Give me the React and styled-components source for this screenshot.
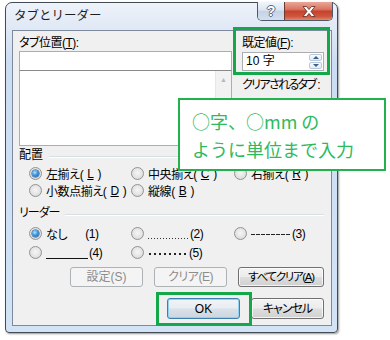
import React from "react";
import styled, { createGlobalStyle, css } from "styled-components";

const GlobalStyle = createGlobalStyle`
  html, body { margin: 0; padding: 0; background: #fff; }
  body {
    font-family: "Liberation Sans", "Noto Sans CJK JP", sans-serif;
    font-size: 12px;
    font-feature-settings: "palt";
    color: #000;
  }
  * { box-sizing: border-box; }
`;

const GREEN = "#14a84a";

const Page = styled.div`
  position: relative;
  width: 390px;
  height: 340px;
  padding: 2px 0 0 5px;
  overflow: hidden;
`;

const Window = styled.div`
  width: 333px;
  height: 331px;
  border: 1px solid #434b55;
  border-radius: 7px 7px 4px 4px;
  background: linear-gradient(180deg, #eef3fa 0px, #dfe8f5 26px, #cbddf2 60px, #d2e3f6 100%);
  padding: 0 5px 6px 6px;
  display: flex;
  flex-direction: column;
  box-shadow: 1px 1px 2px rgba(0, 0, 0, 0.4);
`;

const TitleBar = styled.div`
  height: 27px;
  display: flex;
  align-items: flex-start;
  margin-right: -1px;
  flex: none;
`;

const Title = styled.div`
  padding: 4px 0 0 2px;
  font-family: "Noto Sans CJK JP", sans-serif;
  font-feature-settings: normal;
  font-size: 12.5px;
  line-height: 16px;
  color: #1e1e1e;
`;

const CaptionButtons = styled.div`
  margin-left: auto;
  margin-top: -1px;
  display: flex;
  border: 1px solid #4e5a68;
  border-top: none;
  border-radius: 0 0 5px 5px;
  overflow: hidden;
  height: 19px;
`;

const CaptionButton = styled.div`
  width: ${(p) => p.$w}px;
  height: 100%;
  display: flex;
  align-items: center;
  justify-content: center;
  ${(p) =>
    p.$close
      ? css`
          background: linear-gradient(180deg, #e9a797 0%, #da7663 40%, #c6432d 52%, #cf553e 80%, #e08a6d 100%);
          border-left: 1px solid #6b3a33;
        `
      : css`
          background: linear-gradient(180deg, #f1f5fb 0%, #dbe5f1 45%, #c4d3e6 52%, #d3e0f0 100%);
        `}
`;

const HelpGlyph = styled.span`
  font-family: "Liberation Sans", sans-serif;
  font-weight: bold;
  font-size: 14px;
  line-height: 14px;
  color: #fff;
  text-shadow: -1px 0 #5b6b80, 1px 0 #5b6b80, 0 -1px #5b6b80, 0 1px #5b6b80;
`;

const Client = styled.div`
  flex: 1;
  border: 1px solid #7c8a9c;
  background: #f0f0f0;
  padding: 5px 7px 0 6px;
  display: flex;
  flex-direction: column;
`;

const TopGrid = styled.div`
  display: grid;
  grid-template-columns: 213px 82px;
  column-gap: 10px;
`;

const Column = styled.div`
  display: flex;
  flex-direction: column;
`;

const Label = styled.div`
  line-height: 15px;
  height: 15px;
  white-space: nowrap;
  margin-top: ${(p) => p.$mt || 0}px;
  letter-spacing: ${(p) => p.$ls || 0}px;
`;

const TextBox = styled.div`
  height: 20px;
  background: #fff;
  border: 1px solid #abadb3;
  border-bottom: 1px solid #8a8a8a;
`;

const ListBox = styled.div`
  height: 75px;
  background: #fff;
  border: 1px solid #abadb3;
  border-top: none;
  display: flex;
  justify-content: flex-end;
`;

const ScrollBar = styled.div`
  width: 16px;
  background: #f2f2f2;
  border-left: 1px solid #e6e6e6;
`;

const ScrollArrow = styled.div`
  height: 17px;
  display: flex;
  align-items: center;
  justify-content: center;
  color: #b8b8b8;
  font-size: 7px;
  line-height: 7px;
`;

const Field = styled.div`
  position: relative;
  display: flex;
  flex-direction: column;
`;

const Highlight = styled.div`
  position: absolute;
  border: 3px solid ${GREEN};
  pointer-events: none;
  top: ${(p) => p.$t}px;
  left: ${(p) => p.$l}px;
  right: ${(p) => p.$r}px;
  bottom: ${(p) => p.$b}px;
`;

const Spinner = styled.div`
  margin-top: 1px;
  height: 19px;
  background: #fff;
  border: 1px solid #abadb3;
  display: flex;
  align-items: center;
  padding-left: 3px;
`;

const SpinValue = styled.span`
  flex: 1;
  line-height: 15px;
`;

const SpinButtons = styled.div`
  width: 14px;
  height: 100%;
  display: flex;
  flex-direction: column;
  padding: 1px 1px 1px 0;
  gap: 1px;
`;

const SpinHalf = styled.div`
  flex: 1;
  border: 1px solid #b9c9dc;
  border-radius: 2px;
  background: linear-gradient(180deg, #f7fafd, #e3ebf5);
  display: flex;
  align-items: center;
  justify-content: center;
`;

const Tri = styled.span`
  width: 0;
  height: 0;
  border-left: 3px solid transparent;
  border-right: 3px solid transparent;
  ${(p) =>
    p.$down
      ? css`border-top: 3px solid #3c5f8c;`
      : css`border-bottom: 3px solid #3c5f8c;`}
`;

const GroupHeader = styled.div`
  display: flex;
  align-items: center;
  height: 15px;
  line-height: 15px;
  margin-top: ${(p) => p.$mt}px;
  letter-spacing: ${(p) => p.$ls || 0}px;
`;

const GroupLine = styled.div`
  flex: 1;
  height: 1px;
  margin: 2px 0 0 6px;
  background: #d5dfe6;
  box-shadow: 0 1px 0 #fff;
`;

const OptionGrid = styled.div`
  display: grid;
  grid-template-columns: 102px 103px auto;
  grid-auto-rows: ${(p) => p.$row}px;
  padding-left: 10px;
  margin-top: ${(p) => p.$mt}px;
`;

const Option = styled.label`
  display: flex;
  align-items: center;
  gap: 4px;
  white-space: nowrap;
  letter-spacing: -0.4px;
`;

const Radio = styled.span`
  position: relative;
  flex: none;
  width: 13px;
  height: 13px;
  border-radius: 50%;
  border: 1px solid #939393;
  background: radial-gradient(circle at 50% 45%, #f6f6f6 0%, #e4e4e4 55%, #cfcfcf 100%);
  ${(p) =>
    p.$checked &&
    css`
      &::after {
        content: "";
        position: absolute;
        left: 2px;
        top: 2px;
        width: 7px;
        height: 7px;
        border-radius: 50%;
        background: radial-gradient(circle at 40% 35%, #b9e3ff 0%, #3b95dd 45%, #1a5b9c 100%);
        box-shadow: 0 0 0 0.5px #1d4f80;
      }
    `}
`;

const LeaderText = styled.span`
  display: flex;
  align-items: center;
`;

const Leader = styled.span`
  display: inline-block;
  width: ${(p) => p.$w}px;
  height: 14px;
  margin-right: 1px;
  ${(p) =>
    p.$kind === "dots" &&
    css`
      background: repeating-linear-gradient(90deg, #333 0 1px, transparent 1px 3px) left 11px / 100% 1px no-repeat;
    `}
  ${(p) =>
    p.$kind === "dash" &&
    css`
      background: repeating-linear-gradient(90deg, #222 0 4px, transparent 4px 5px) left 7px / 100% 1px no-repeat;
    `}
  ${(p) =>
    p.$kind === "line" &&
    css`
      background: linear-gradient(#111, #111) left 12px / 100% 1px no-repeat;
    `}
  ${(p) =>
    p.$kind === "mid" &&
    css`
      background: repeating-linear-gradient(90deg, #222 0 2px, transparent 2px 5px) 1px 7px / 100% 2px no-repeat;
    `}
`;

const Gap = styled.span`
  display: inline-block;
  width: ${(p) => p.$w}px;
`;

const ButtonRow = styled.div`
  display: flex;
  justify-content: flex-end;
  gap: 11px;
  margin-top: ${(p) => p.$mt}px;
`;

const ButtonWrap = styled.div`
  position: relative;
  display: flex;
`;

const Button = styled.div`
  width: ${(p) => p.$w}px;
  height: ${(p) => p.$h}px;
  display: flex;
  align-items: center;
  justify-content: center;
  border-radius: 3px;
  border: 1px solid #707070;
  background: linear-gradient(180deg, #f3f3f3 0%, #ececec 48%, #dedede 52%, #d0d0d0 100%);
  box-shadow: inset 0 0 0 1px rgba(255, 255, 255, 0.75);
  color: #000;
  white-space: nowrap;
  overflow: hidden;
  ${(p) =>
    p.$disabled &&
    css`
      border-color: #adb2b5;
      background: #f4f4f4;
      box-shadow: none;
      color: #8c8c8c;
    `}
  ${(p) =>
    p.$default &&
    css`
      border-color: #3c7fb1;
      background: linear-gradient(180deg, #f1f4f7 0%, #e8edf2 48%, #d9e1e9 52%, #ccd6e0 100%);
      box-shadow: inset 0 0 0 1px #8fd2f5;
    `}
`;

const ButtonText = styled.span`
  font-size: ${(p) => p.$fs || 12}px;
  letter-spacing: ${(p) => p.$ls || 0}px;
  line-height: 14px;
`;

const Callout = styled.div`
  position: absolute;
  left: 178px;
  top: 98px;
  width: 208px;
  height: 73px;
  background: #fff;
  border: 2px solid #22b14c;
  padding: 7px 0 0 12px;
  font-family: "Noto Sans CJK JP", sans-serif;
  font-feature-settings: normal;
  font-size: 18px;
  line-height: 28px;
  color: #2cba5e;
  white-space: nowrap;
`;

export default function App() {
  return (
    <Page>
      <GlobalStyle />
      <Window>
        <TitleBar>
          <Title>タブとリーダー</Title>
          <CaptionButtons>
            <CaptionButton $w={26}>
              <HelpGlyph>?</HelpGlyph>
            </CaptionButton>
            <CaptionButton $w={48} $close>
              <svg width="14" height="11" viewBox="0 0 14 11">
                <path
                  d="M1 0.5 H4.5 L7 3.5 L9.5 0.5 H13 L9 5.5 L13 10.5 H9.5 L7 7.5 L4.5 10.5 H1 L5 5.5 Z"
                  fill="#fff"
                  stroke="#5a2a22"
                  strokeWidth="0.8"
                  strokeLinejoin="round"
                />
              </svg>
            </CaptionButton>
          </CaptionButtons>
        </TitleBar>
        <Client>
          <TopGrid>
            <Column>
              <Label $ls={-0.5}>
                タブ位置(<u>T</u>):
              </Label>
              <TextBox />
              <ListBox>
                <ScrollBar>
                  <ScrollArrow>▲</ScrollArrow>
                </ScrollBar>
              </ListBox>
            </Column>
            <Column>
              <Field>
                <Label $ls={-0.5}>
                  既定値(<u>F</u>):
                </Label>
                <Spinner>
                  <SpinValue>10 字</SpinValue>
                  <SpinButtons>
                    <SpinHalf>
                      <Tri />
                    </SpinHalf>
                    <SpinHalf>
                      <Tri $down />
                    </SpinHalf>
                  </SpinButtons>
                </Spinner>
                <Highlight $t={-9} $l={-9} $r={-6} $b={-4} />
              </Field>
              <Label $mt={7} $ls={-1.6}>
                クリアされるタブ :
              </Label>
            </Column>
          </TopGrid>

          <GroupHeader $mt={2}>
            配置
            <GroupLine />
          </GroupHeader>
          <OptionGrid $row={17} $mt={2}>
            <Option>
              <Radio $checked />
              左揃え(<u>L</u>)
            </Option>
            <Option>
              <Radio />
              中央揃え(<u>C</u>)
            </Option>
            <Option>
              <Radio />
              右揃え(<u>R</u>)
            </Option>
            <Option>
              <Radio />
              小数点揃え(<u>D</u>)
            </Option>
            <Option>
              <Radio />
              縦線(<u>B</u>)
            </Option>
          </OptionGrid>

          <GroupHeader $mt={7} $ls={-1}>
            リーダー
            <GroupLine />
          </GroupHeader>
          <OptionGrid $row={19} $mt={3}>
            <Option>
              <Radio $checked />
              <LeaderText>
                なし
                <Gap $w={18} />
                (1)
              </LeaderText>
            </Option>
            <Option>
              <Radio />
              <LeaderText>
                <Leader $w={41} $kind="dots" />
                (2)
              </LeaderText>
            </Option>
            <Option>
              <Radio />
              <LeaderText>
                <Leader $w={40} $kind="dash" />
                (3)
              </LeaderText>
            </Option>
            <Option>
              <Radio />
              <LeaderText>
                <Leader $w={42} $kind="line" />
                (4)
              </LeaderText>
            </Option>
            <Option>
              <Radio />
              <LeaderText>
                <Leader $w={40} $kind="mid" />
                (5)
              </LeaderText>
            </Option>
          </OptionGrid>

          <ButtonRow $mt={5}>
            <Button $w={73} $h={20} $disabled>
              <ButtonText>設定(S)</ButtonText>
            </Button>
            <Button $w={73} $h={20} $disabled>
              <ButtonText $ls={-0.5}>クリア(E)</ButtonText>
            </Button>
            <Button $w={86} $h={20}>
              <ButtonText $fs={11.5} $ls={-1.3}>
                すべてクリア(<u>A</u>)
              </ButtonText>
            </Button>
          </ButtonRow>

          <ButtonRow $mt={11}>
            <ButtonWrap>
              <Button $w={73} $h={21} $default>
                <ButtonText>OK</ButtonText>
              </Button>
              <Highlight $t={-6} $l={-11} $r={-12} $b={-7} />
            </ButtonWrap>
            <Button $w={73} $h={21}>
              <ButtonText $ls={-1}>キャンセル</ButtonText>
            </Button>
          </ButtonRow>
        </Client>
      </Window>
      <Callout>
        ○字、○mm の
        <br />
        ように単位まで入力
      </Callout>
    </Page>
  );
}
